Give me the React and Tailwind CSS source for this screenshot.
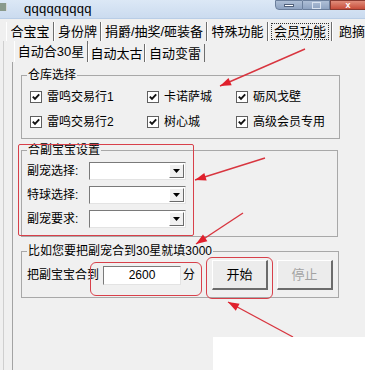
import React from 'react';

const mainTabs = [
  { label: '合宝宝', w: 'w-[48px]' },
  { label: '身份牌', w: 'w-[47px]' },
  { label: '捐爵/抽奖/砸装备', w: 'w-[106px]' },
  { label: '特殊功能', w: 'w-[61px]' },
  { label: '会员功能', w: 'w-[64px]', active: true },
  { label: '跑摘', w: 'w-[40px]' },
];

const subTabs = [
  { label: '自动合30星', w: 'w-[74px]', active: true },
  { label: '自动太古', w: 'w-[57px]' },
  { label: '自动变雷', w: 'w-[60px]' },
];

const depots = [
  ['雷鸣交易行1', '卡诺萨城', '砺风戈壁'],
  ['雷鸣交易行2', '树心城', '高级会员专用'],
];

// red annotation arrows, drawn over the screenshot
const arrows = [
  [305, 49, 220, 86],
  [265, 158, 195, 180],
  [243, 213, 196, 244],
  [293, 337, 228, 302],
];

const arrowHead = (x1, y1, x2, y2) => {
  const a = Math.atan2(y2 - y1, x2 - x1);
  const len = 11;
  const half = 4;
  const bx = x2 - len * Math.cos(a);
  const by = y2 - len * Math.sin(a);
  const px = -Math.sin(a) * half;
  const py = Math.cos(a) * half;
  return `${x2},${y2} ${bx + px},${by + py} ${bx - px},${by - py}`;
};

const CheckBox = ({ label }) => (
  <div className="flex items-center h-[16px]">
    <span className="w-[12px] h-[12px] bg-white border border-[#5f5f5f] flex items-center justify-center">
      <svg width="8" height="8" viewBox="0 0 8 8">
        <path d="M0.8 3.6 L3 5.9 L7.2 1.4" stroke="#111" strokeWidth="1.9" fill="none" />
      </svg>
    </span>
    <span className="ml-[5px] text-[12px] leading-[16px]">{label}</span>
  </div>
);

const Combo = ({ label }) => (
  <div className="flex items-center h-[18px]">
    <span className="w-[62px] text-[12px]">{label}</span>
    <div className="w-[97px] h-[18px] bg-white border-t border-l border-[#7a7a7a] border-r border-b border-r-[#e3e3e3] border-b-[#e3e3e3] flex justify-end items-center pr-[1px]">
      <div className="w-[15px] h-[14px] bg-[#f0f0f0] border-t border-l border-white border-r border-b border-r-[#6a6a6a] border-b-[#6a6a6a] flex items-center justify-center">
        <svg width="7" height="4" viewBox="0 0 7 4">
          <path d="M0 0 H7 L3.5 4 Z" fill="#000" />
        </svg>
      </div>
    </div>
  </div>
);

const Button = ({ label, disabled }) => (
  <div
    className={`w-[56px] h-[30px] flex items-center justify-center text-[13px] bg-[#ececec] border-t border-l border-white border-r-2 border-b-2 border-r-[#6b6b6b] border-b-[#6b6b6b] ${
      disabled ? 'text-[#a3a3a3]' : 'text-black'
    }`}
  >
    {label}
  </div>
);

export default function App() {
  return (
    <div className="relative w-[365px] h-[370px] overflow-hidden bg-[#f0f0f0] text-black font-['Liberation_Sans','Noto_Sans_CJK_SC',sans-serif]">
      {/* title bar */}
      <div className="h-[19px] flex items-start bg-gradient-to-b from-[#dce8f6] to-[#cbdbef] border-b border-[#b9cde6]">
        <div className="mt-[3px] w-[7px] h-[8px] bg-[#8a9a8c] border-r border-[#d8d8d8]" />
        <span className="ml-[17px] mt-[0px] text-[13px] leading-[17px] tracking-[0.3px]">qqqqqqqqq</span>
        <div className="ml-auto flex h-[10px]">
          <div className="w-[28px] h-[10px] bg-gradient-to-b from-[#aebfd6] to-[#8ea3c1] border border-[#6b7f9c] rounded-bl-[4px] flex items-center justify-center">
            <div className="w-[10px] h-[3px] bg-white border border-[#50607a]" />
          </div>
          <div className="w-[27px] h-[10px] bg-gradient-to-b from-[#aebfd6] to-[#8ea3c1] border-y border-r border-[#6b7f9c] flex items-center justify-center">
            <div className="w-[9px] h-[7px] border border-[#d8e2ef]" />
          </div>
          <div className="w-[35px] h-[10px] bg-gradient-to-b from-[#e08c7a] to-[#c74c3a] border-y border-l border-[#8a3a30] flex items-center justify-center text-white text-[9px] leading-[9px] font-bold">
            x
          </div>
        </div>
      </div>

      {/* main tabs */}
      <div className="h-[22px] flex items-end pl-[6px]">
        {mainTabs.map((t) => (
          <div
            key={t.label}
            className={`${t.w} h-[19px] shrink-0 flex items-center justify-center border-l border-white border-r border-r-[#6d6d6d] text-[13px] leading-[15px]`}
          >
            {t.active ? (
              <span className="px-[2px] outline-1 outline-dotted outline-[#333]">{t.label}</span>
            ) : (
              t.label
            )}
          </div>
        ))}
      </div>

      {/* main tab panel */}
      <div className="ml-[3px] h-[329px] border-l border-[#cfcfcf] pl-[8px]">
        {/* sub tabs */}
        <div className="h-[21px] flex items-end pl-[2px]">
          {subTabs.map((t) => (
            <div
              key={t.label}
              className={`${t.w} ${t.active ? 'h-[21px]' : 'h-[18px]'} shrink-0 flex items-center justify-center border-l border-white border-r border-r-[#6d6d6d] text-[13px] leading-[15px]`}
            >
              {t.label}
            </div>
          ))}
        </div>

        {/* sub tab panel */}
        <div className="h-[308px] border-l border-[#a3a3a3] pl-[8px] pt-[6px] flex flex-col">
          <fieldset className="w-[319px] border border-[#a8a8a8]">
            <legend className="ml-[5px] px-[1px] text-[12px] leading-[14px]">仓库选择</legend>
            <div className="pt-[7px] pb-[8px] pl-[8px] flex flex-col gap-[9px]">
              {depots.map((row, i) => (
                <div key={i} className="grid grid-cols-[117px_89px_1fr]">
                  {row.map((d) => (
                    <CheckBox key={d} label={d} />
                  ))}
                </div>
              ))}
            </div>
          </fieldset>

          <fieldset className="mt-[4px] w-[317px] border border-[#a8a8a8]">
            <legend className="ml-[5px] px-[1px] text-[12px] leading-[14px]">合副宝宝设置</legend>
            <div className="pt-[5px] pb-[8px] pl-[5px] flex flex-col gap-[6px]">
              <Combo label="副宠选择:" />
              <Combo label="特球选择:" />
              <Combo label="副宠要求:" />
            </div>
          </fieldset>

          <fieldset className="mt-[7px] w-[318px] border border-[#a8a8a8]">
            <legend className="ml-[5px] px-[1px] text-[12px] leading-[14px]">比如您要把副宠合到30星就填3000</legend>
            <div className="pt-[2px] pb-[7px] pl-[5px] flex items-center">
              <span className="w-[76px] text-[12px]">把副宝宝合到</span>
              <div className="w-[78px] h-[19px] bg-white border-t border-l border-[#7a7a7a] border-r border-b border-r-[#e3e3e3] border-b-[#e3e3e3] flex items-center justify-center text-[12px]">
                2600
              </div>
              <span className="ml-[2px] text-[12px]">分</span>
              <div className="ml-[17px]">
                <Button label="开始" />
              </div>
              <div className="ml-[9px]">
                <Button label="停止" disabled />
              </div>
            </div>
          </fieldset>
        </div>
      </div>

      {/* annotations */}
      <div className="absolute left-[18px] top-[144px] w-[176px] h-[92px] border border-[#d8404a] rounded-[2px] pointer-events-none" />
      <div className="absolute left-[90px] top-[262px] w-[112px] h-[34px] border border-[#d8404a] rounded-[6px] pointer-events-none" />
      <div className="absolute left-[206px] top-[257px] w-[67px] h-[42px] border border-[#d8404a] rounded-[6px] pointer-events-none" />
      <svg className="absolute inset-0 pointer-events-none" width="365" height="370" viewBox="0 0 365 370">
        {arrows.map(([x1, y1, x2, y2], i) => (
          <g key={i}>
            <line x1={x1} y1={y1} x2={x2} y2={y2} stroke="#d8353f" strokeWidth="1.4" />
            <polygon points={arrowHead(x1, y1, x2, y2)} fill="#e0202c" />
          </g>
        ))}
      </svg>
      <div className="absolute left-[213px] top-[337px] w-[152px] h-[33px] bg-white" />
    </div>
  );
}
